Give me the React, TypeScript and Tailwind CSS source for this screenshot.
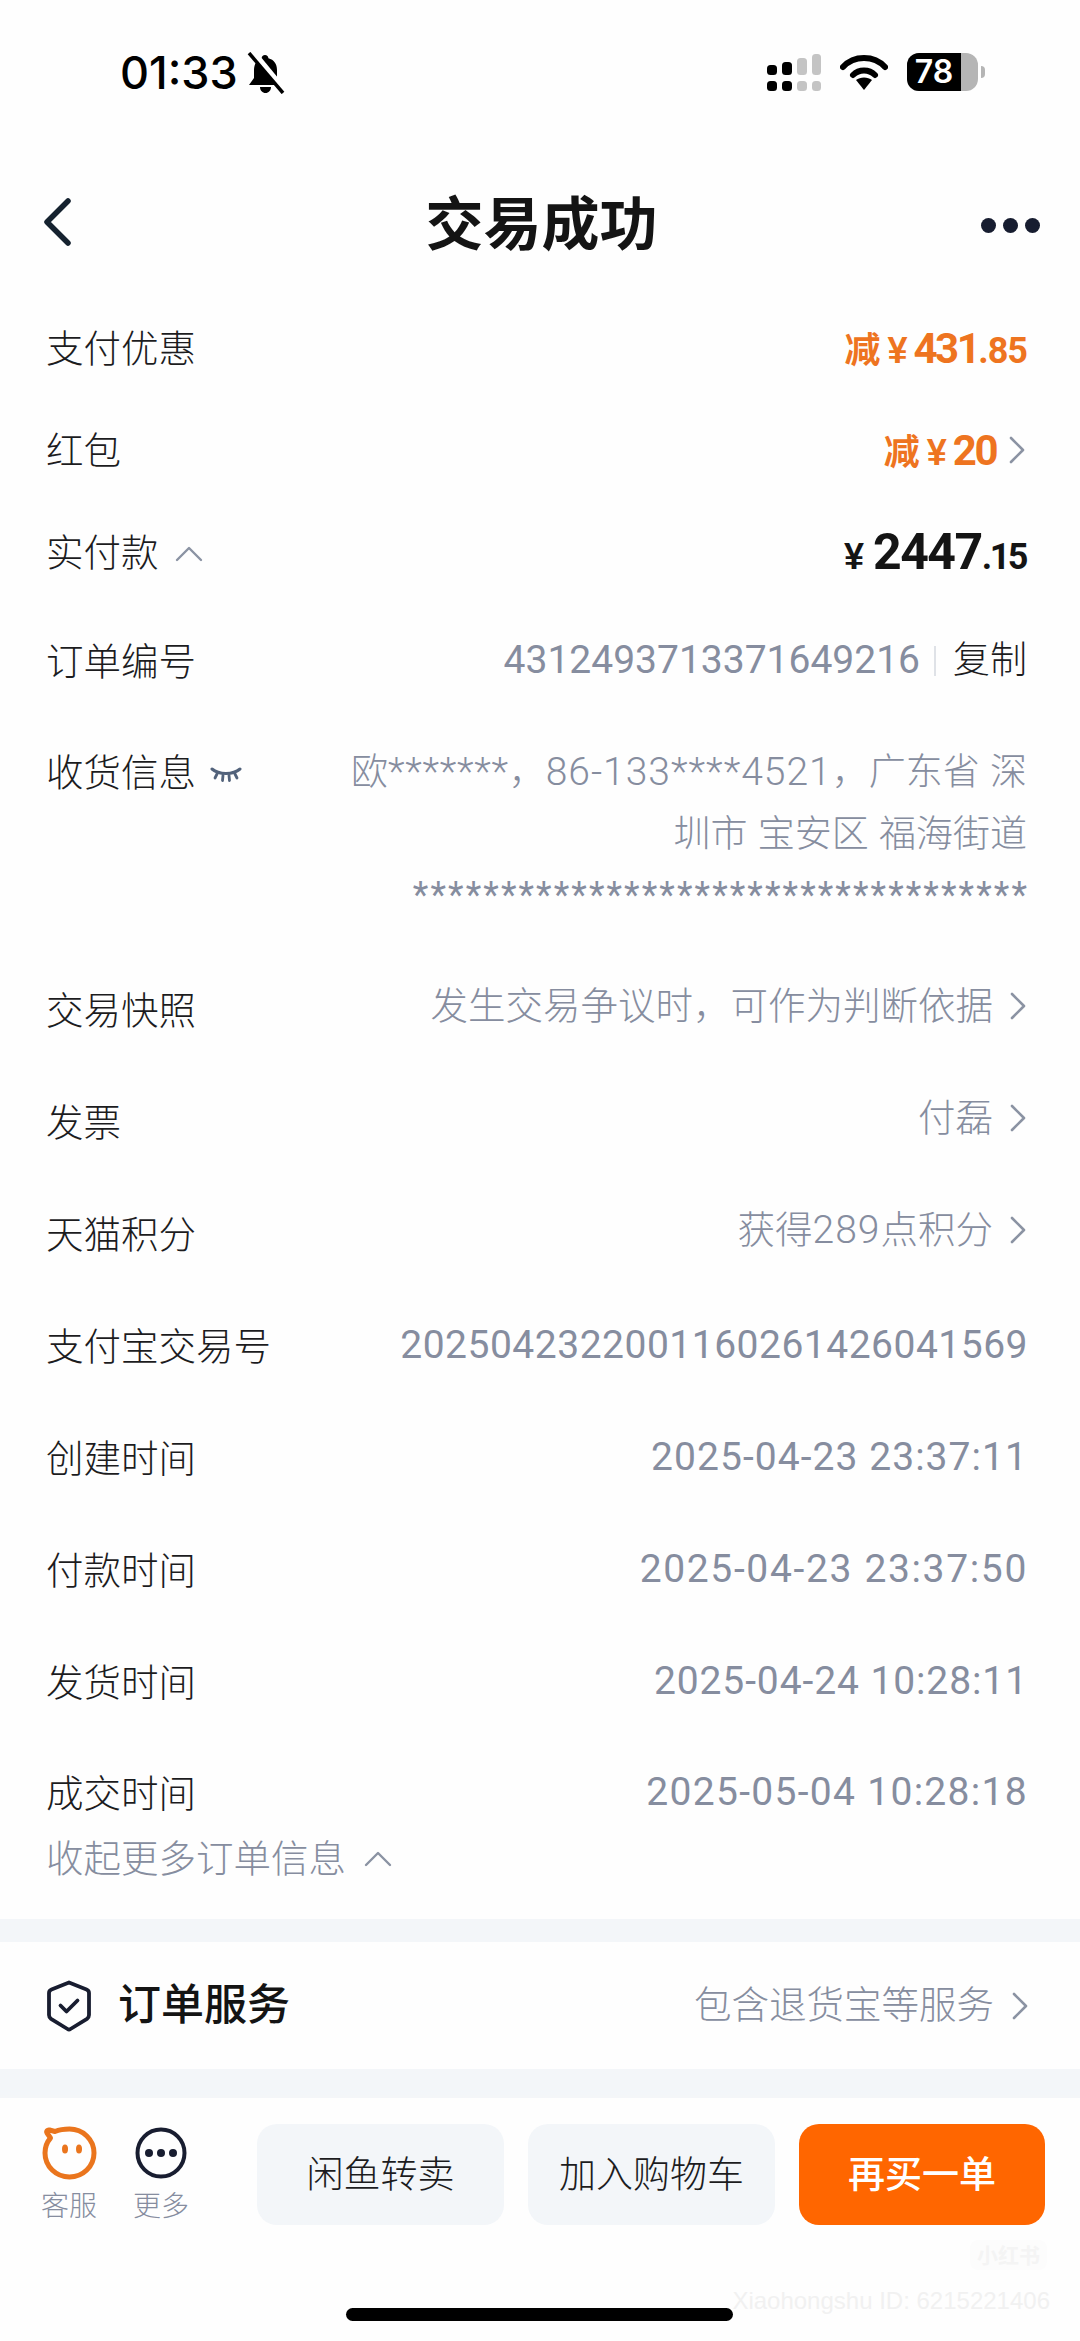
import React from 'react';

const cjk = { fontFamily: '"Liberation Sans", "Noto Sans CJK SC", sans-serif' };
const num = { fontFamily: 'Roboto, "Noto Sans CJK SC", sans-serif' };

const Chevron = () => (
  <svg width="16" height="28" viewBox="0 0 16 28" fill="none" className="shrink-0">
    <path d="M2 2l12 12L2 26" stroke="#8b93a3" strokeWidth="2.6" strokeLinecap="round" strokeLinejoin="round" />
  </svg>
);

const Caret = () => (
  <svg width="28" height="16" viewBox="0 0 28 16" fill="none" className="shrink-0">
    <path d="M2 14L14 2l12 12" stroke="#8b93a3" strokeWidth="2.4" strokeLinecap="round" strokeLinejoin="round" />
  </svg>
);

const StatusBar = () => (
  <div className="h-[140px] flex items-start justify-between pt-[52px] pl-[120px] pr-[95px]">
    <div className="flex items-center gap-[7px] text-black">
      <span className="text-[45px] leading-[42px] font-medium" style={{ fontFamily: 'Inter, sans-serif' }}>01:33</span>
      <svg width="42" height="42" viewBox="0 0 42 42">
        <path d="M20 3c2 0 3.400 1.400 3.400 3.200C29 7.500 32 12 32 18v8l5 7H4l5-7v-8C9 12 12 7.500 16.600 6.200 16.600 4.400 18 3 20 3z" fill="#000" />
        <path d="M15 35h11c0 3.500-2.500 6-5.500 6S15 38.500 15 35z" fill="#000" />
        <path d="M7 -1l33 40" stroke="#fff" strokeWidth="6" />
        <path d="M4 1l34 40" stroke="#000" strokeWidth="3.500" />
      </svg>
    </div>
    <div className="flex items-center gap-[19px] mt-[1px]">
      <svg width="54" height="38" viewBox="0 0 54 38">
        <rect x="0" y="12" width="10" height="10" rx="3.500" fill="#000" />
        <rect x="15" y="9" width="10" height="13" rx="3.500" fill="#000" />
        <rect x="30" y="5" width="10" height="17" rx="3.500" fill="#c4c4c4" />
        <rect x="45" y="1" width="9" height="21" rx="3.500" fill="#c4c4c4" />
        <rect x="0" y="28" width="10" height="10" rx="3.500" fill="#000" />
        <rect x="15" y="28" width="10" height="10" rx="3.500" fill="#000" />
        <rect x="30" y="28" width="10" height="10" rx="3.500" fill="#c4c4c4" />
        <rect x="45" y="28" width="9" height="10" rx="3.500" fill="#c4c4c4" />
      </svg>
      <svg width="48" height="36" viewBox="0 0 48 36" fill="none">
        <path d="M3 13C14 1 34 1 45 13" stroke="#000" strokeWidth="6" strokeLinecap="round" />
        <path d="M13 21c6-6 16-6 22 0" stroke="#000" strokeWidth="6" strokeLinecap="round" />
        <path d="M16 26c4-3.500 12-3.500 16 0l-8 10z" fill="#000" />
      </svg>
      <div className="flex items-center">
        <div className="w-[71px] h-[38px] rounded-[12px] overflow-hidden flex bg-[#b5b5b5]">
          <div className="w-[54px] bg-black text-white text-[32px] leading-[38px] font-semibold text-center" style={{ fontFamily: 'Inter, sans-serif' }}>78</div>
        </div>
        <div className="w-[4px] h-[12px] ml-[3px] rounded-r-full bg-[#b5b5b5]" />
      </div>
    </div>
  </div>
);

const Header = () => (
  <div className="h-[157px] grid grid-cols-3 items-start pl-[43px] pr-[40px] pt-[58px]">
    <svg width="28" height="48" viewBox="0 0 28 48" fill="none">
      <path d="M25 3L4 24l21 21" stroke="#15222f" strokeWidth="5.500" strokeLinecap="round" strokeLinejoin="round" />
    </svg>
    <h1 className="text-[58px] leading-[54px] font-bold text-[#141414] text-center whitespace-nowrap">交易成功</h1>
    <div className="flex items-center justify-end gap-[7px] h-[54px]">
      <span className="w-[15px] h-[15px] rounded-full bg-[#171d30]" />
      <span className="w-[15px] h-[15px] rounded-full bg-[#171d30]" />
      <span className="w-[15px] h-[15px] rounded-full bg-[#171d30]" />
    </div>
  </div>
);

const Label = ({ children }: { children: React.ReactNode }) => (
  <span className="text-[37.5px] text-[#1c1c1e] font-light pt-[3px]">{children}</span>
);

const Row = ({ label, children, className = 'h-[112px]' }: { label: React.ReactNode; children: React.ReactNode; className?: string }) => (
  <div className={`flex items-center justify-between ${className}`}>
    <Label>{label}</Label>
    {children}
  </div>
);

const Value = ({ children, arrow }: { children: React.ReactNode; arrow?: boolean }) => (
  <div className="flex items-center gap-[17px] text-[37.5px] text-[#868d9f] font-light -mt-[8px] mr-[1px]">
    <span>{children}</span>
    {arrow && <Chevron />}
  </div>
);

const Plain = ({ text, track = 'tracking-[0px]' }: { text: string; track?: string }) => (
  <span className={`text-[39px] text-[#868d9f] -mt-[2px] -mr-[1px] ${track}`} style={num}>{text}</span>
);

const Amount = ({ prefix, big, small, color }: { prefix?: string; big: string; small?: string; color: string }) => (
  <div className={`flex items-baseline font-bold ${color}`}>
    {prefix && <span className="text-[36px] mr-[7px]">{prefix}</span>}
    <span className="text-[36px] mr-[6px]">¥</span>
    <span className="text-[42px] tracking-[-2.500px]" style={num}>{big}</span>
    {small && <span className="text-[36px] tracking-[-1px]" style={num}>{small}</span>}
  </div>
);

const Mask = ({ children, track }: { children: React.ReactNode; track: string }) => (
  <span className={`text-[39px] ${track}`} style={num}>{children}</span>
);

const DetailList = () => (
  <div className="pl-[46px] pr-[53px]">
    <Row label="支付优惠" className="h-[102px]">
      <Amount prefix="减" big="431" small=".85" color="text-[#ee7420]" />
    </Row>
    <Row label="红包" className="h-[102px]">
      <div className="flex items-center gap-[13px] mr-[2px]">
        <Amount prefix="减" big="20" color="text-[#ee7420]" />
        <Chevron />
      </div>
    </Row>
    <Row
      label={
        <span className="flex items-center gap-[16px]">
          实付款
          <Caret />
        </span>
      }
      className="h-[102px]"
    >
      <div className="flex items-baseline font-bold text-[#141414] mr-[1px]">
        <span className="text-[36px] mr-[9px]">¥</span>
        <span className="text-[50px] tracking-[-1.500px]" style={num}>2447</span>
        <span className="text-[36px] tracking-[-2.500px]" style={num}>.15</span>
      </div>
    </Row>
    <Row label="订单编号" className="h-[112px] mt-[2px]">
      <div className="flex items-center">
        <Plain text="4312493713371649216" />
        <span className="w-[2px] h-[30px] bg-[#dfe2e7] ml-[15px] mr-[17px]" />
        <span className="text-[37px] text-[#1c1c1e] font-light">复制</span>
      </div>
    </Row>
    <div className="flex justify-between pt-[25px] pb-[29px]">
      <div className="flex items-center h-[60px] gap-[14px] pt-[3px]">
        <span className="text-[37.5px] text-[#1c1c1e] font-light">收货信息</span>
        <svg width="32" height="16" viewBox="0 0 32 16" fill="none" className="mt-[2px]">
          <path d="M2 2c7 6 21 6 28 0" stroke="#52627b" strokeWidth="3" strokeLinecap="round" />
          <path d="M7 7l-2 4M13 8.500l-.5 5M19 8.500l.5 5M25 7l2 4" stroke="#52627b" strokeWidth="2.800" strokeLinecap="round" />
        </svg>
      </div>
      <div className="text-right text-[37px] leading-[60px] text-[#868d9f] font-light whitespace-nowrap">
        <div className="h-[60px]">
          欧<Mask track="tracking-[0.7px]">*******</Mask>，<Mask track="tracking-[1px]">86-133****4521</Mask>，广东省 深
        </div>
        <div className="h-[60px] mt-[3px]">圳市 宝安区 福海街道</div>
        <div className="h-[60px] text-[36px] tracking-[2.100px] font-normal -mr-[2px]" style={num}>
          ***********************************
        </div>
      </div>
    </div>
    <Row label="交易快照"><Value arrow>发生交易争议时，可作为判断依据</Value></Row>
    <Row label="发票"><Value arrow>付磊</Value></Row>
    <Row label="天猫积分">
      <Value arrow>
        获得<Mask track="tracking-[1px]">289</Mask>点积分
      </Value>
    </Row>
    <Row label="支付宝交易号"><Plain text="2025042322001160261426041569" track="tracking-[0.5px]" /></Row>
    <Row label="创建时间"><Plain text="2025-04-23 23:37:11" track="tracking-[1.050px]" /></Row>
    <Row label="付款时间"><Plain text="2025-04-23 23:37:50" track="tracking-[1.650px]" /></Row>
    <Row label="发货时间"><Plain text="2025-04-24 10:28:11" track="tracking-[0.900px]" /></Row>
    <Row label="成交时间" className="h-[78px] mt-[16px]"><Plain text="2025-05-04 10:28:18" track="tracking-[1.300px]" /></Row>
    <div className="h-[52px] flex items-center gap-[18px] text-[37.5px] text-[#868d9f] font-light pt-[2px]">
      <span>收起更多订单信息</span>
      <Caret />
    </div>
  </div>
);

const OrderService = () => (
  <div className="h-[127px] flex items-center justify-between pl-[46px] pr-[52px]">
    <div className="flex items-center gap-[26px]">
      <svg width="46" height="52" viewBox="0 0 46 52" fill="none">
        <path d="M23 2.500L40.500 9.500Q43 10.500 43 13V35Q43 37.500 41 38.800L24.500 49Q23 50 21.500 49L5 38.800Q3 37.500 3 35V13Q3 10.500 5.500 9.500Z" stroke="#181d30" strokeWidth="3.800" strokeLinejoin="round" />
        <path d="M14.500 25.500l6 6 11-11" stroke="#181d30" strokeWidth="3.800" strokeLinecap="round" strokeLinejoin="round" />
      </svg>
      <span className="text-[43px] text-[#141414] font-medium">订单服务</span>
    </div>
    <div className="flex items-center gap-[18px] text-[37.5px] text-[#868d9f] font-light">
      <span>包含退货宝等服务</span>
      <Chevron />
    </div>
  </div>
);

const BottomBar = () => (
  <div className="relative border-t-[3px] border-[#f4f6f8] h-[243px] pt-[26px] pl-[41px] pr-[35px]">
    <div className="flex items-start">
      <div className="flex flex-col items-center w-[56px]">
        <svg width="57" height="57" viewBox="0 0 57 57" fill="none">
          <path d="M28.500 5C42 5 53 15.500 53 29c0 13.500-11 24-24.500 24S4 42.500 4 29c0-6 2-11 5.500-15L6 9c-1-2 .5-3.500 2.500-3l5.500 1.500C18 5.800 23 5 28.500 5z" stroke="#ea751d" strokeWidth="5" strokeLinejoin="round" />
          <ellipse cx="24" cy="25" rx="3" ry="4.500" fill="#ea751d" />
          <ellipse cx="38" cy="25" rx="3" ry="4.500" fill="#ea751d" />
        </svg>
        <span className="text-[28px] leading-[34px] mt-[9px] text-[#868d9f] font-light whitespace-nowrap">客服</span>
      </div>
      <div className="flex flex-col items-center w-[56px] ml-[36px]">
        <svg width="52" height="52" viewBox="0 0 52 52" fill="none" className="mt-[3px]">
          <circle cx="26" cy="26" r="23.500" stroke="#181d30" strokeWidth="4" />
          <circle cx="14" cy="26" r="4" fill="#181d30" />
          <circle cx="26" cy="26" r="4" fill="#181d30" />
          <circle cx="38" cy="26" r="4" fill="#181d30" />
        </svg>
        <span className="text-[28px] leading-[34px] mt-[11px] text-[#868d9f] font-light whitespace-nowrap">更多</span>
      </div>
      <div className="flex-1 flex justify-end gap-[24px]">
        <button className="w-[247px] h-[101px] pt-[2px] rounded-[20px] bg-[#f3f6f9] text-[37px] text-[#1c1c1e] font-light">闲鱼转卖</button>
        <button className="w-[247px] h-[101px] pt-[2px] rounded-[20px] bg-[#f3f6f9] text-[37px] text-[#1c1c1e] font-light">加入购物车</button>
        <button className="w-[246px] h-[101px] pt-[2px] rounded-[20px] bg-[#ff6600] text-[37px] text-white font-medium">再买一单</button>
      </div>
    </div>
    <div className="absolute left-[346px] top-[210px] w-[387px] h-[13px] rounded-full bg-black" />
    <div className="absolute left-[970px] top-[142px] w-[77px] h-[30px] rounded-[8px] bg-[#fcfcfc] flex items-center justify-center text-[21px] leading-none text-[#f4f4f4] font-bold">小红书</div>
    <span className="absolute right-[30px] top-[185px] text-[24px] text-[#f1f1f1]">Xiaohongshu ID: 6215221406</span>
  </div>
);

export default function App() {
  return (
    <div className="w-[1080px] h-[2341px] overflow-hidden bg-[#fefefe]" style={cjk}>
      <StatusBar />
      <Header />
      <DetailList />
      <div className="h-[23px] mt-[35px] bg-[#f3f6f9]" />
      <OrderService />
      <div className="h-[26px] bg-[#f3f6f9]" />
      <BottomBar />
    </div>
  );
}
